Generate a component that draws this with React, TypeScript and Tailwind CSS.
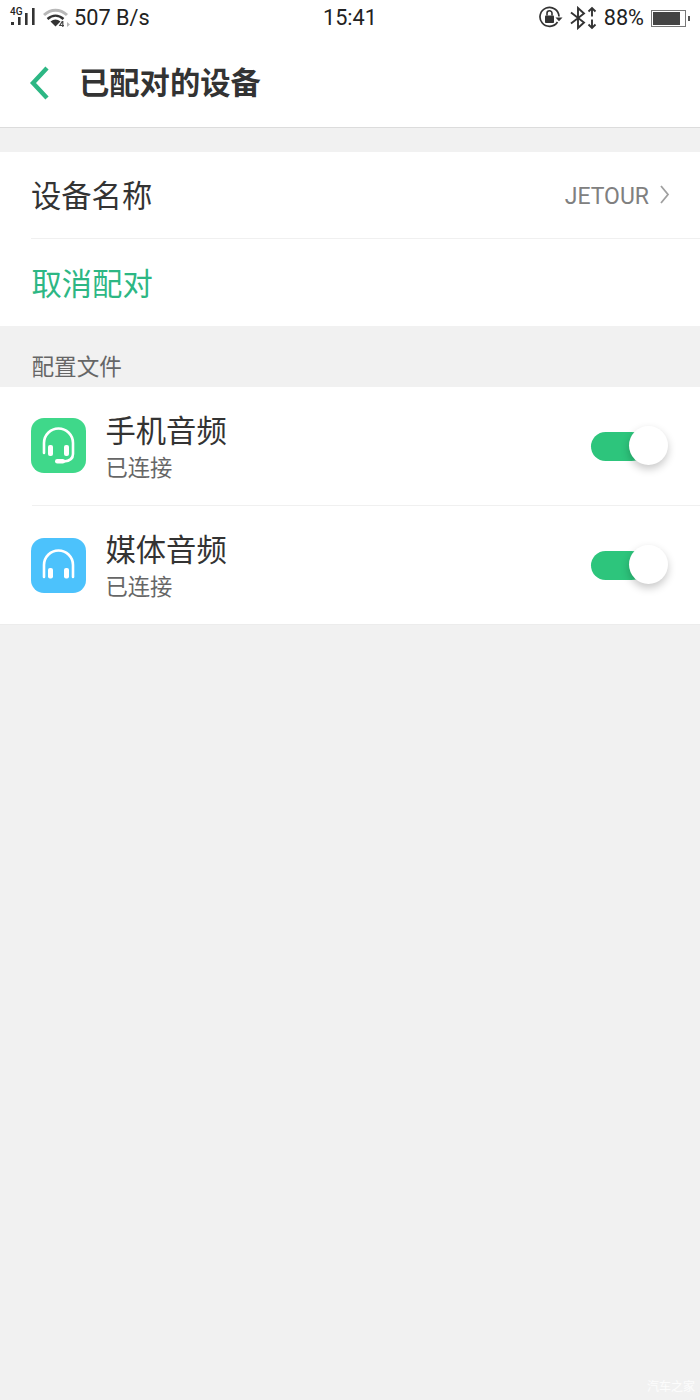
const FONT = "font-['Roboto','Noto_Sans_CJK_SC',sans-serif]";

function SignalIcon() {
  return (
    <svg width="26" height="20" viewBox="0 0 26 20" fill="#333">
      <rect x="1" y="14" width="3" height="3" />
      <rect x="8" y="9" width="2.6" height="8" />
      <rect x="15" y="5" width="2.6" height="12" />
      <rect x="22" y="0" width="2.6" height="17" />
    </svg>
  );
}

function WifiIcon() {
  return (
    <svg width="28" height="20" viewBox="0 0 28 20" fill="none">
      <path d="M1 7C8 0.5 17 0.5 24 7" stroke="#b8b8b8" strokeWidth="3" />
      <path d="M4.5 11C9.5 6.5 15.5 6.5 20.5 11" stroke="#333" strokeWidth="2.4" />
      <path d="M7.5 13.5Q12.5 9.5 17.5 13.5L12.5 18.5z" fill="#333" />
      <path d="M19.5 13 16.8 17.5H21M19.8 13v6" stroke="#444" strokeWidth="1.2" />
      <path d="M24 19v-5l3 2.5z" fill="#b5b5b5" />
    </svg>
  );
}

function RotateLockIcon() {
  return (
    <svg width="24" height="24" viewBox="0 0 24 24" fill="none">
      <path d="M18.5 16A9.5 9.5 0 1 1 20 10.5" stroke="#333" strokeWidth="1.7" />
      <path d="M16.5 11.5h7l-3.5 3.8z" fill="#333" />
      <rect x="6" y="9.5" width="9" height="7.5" rx="0.8" fill="#333" />
      <path d="M8 9.5V7.3a2.5 2.5 0 0 1 5 0v2.2" stroke="#333" strokeWidth="1.6" />
    </svg>
  );
}

function BluetoothArrows() {
  return (
    <svg width="27" height="24" viewBox="0 0 27 24" fill="none" stroke="#333" strokeWidth="1.9">
      <path d="M1 6.5 14 16.5 8 22V2l6 5.5L1 17.5" />
      <path d="M22 2v8.5M18.5 5.5 22 2l3.5 3.5M22 13.5V22M18.5 18.5 22 22l3.5-3.5" />
    </svg>
  );
}

function Battery() {
  return (
    <div className="flex items-center">
      <div className="w-[35px] h-[17px] border border-[#777] bg-white p-[1px] flex">
        <div className="w-[86%] bg-[#444]" />
      </div>
      <div className="w-[2px] h-[5px] ml-[2px] bg-[#555]" />
    </div>
  );
}

function AppIcon({ bg, mic }: { bg: string; mic?: boolean }) {
  return (
    <div className={`w-[55px] h-[55px] rounded-[13px] shrink-0 ${bg} ${mic ? 'mb-[2px]' : ''}`}>
      {mic ? (
        <svg width="55" height="55" viewBox="0 0 55 55" fill="none" stroke="#fff" strokeLinecap="round">
          <path d="M13 35V25a14.5 14.5 0 0 1 29 0v11c0 5-3 7-9 7.5" strokeWidth="2.6" />
          <rect x="17" y="27" width="5" height="11" rx="2" fill="#fff" stroke="none" />
          <rect x="33" y="27" width="5" height="11" rx="2" fill="#fff" stroke="none" />
          <rect x="24" y="41" width="10" height="4.5" rx="2.2" fill="#fff" stroke="none" />
        </svg>
      ) : (
        <svg width="55" height="55" viewBox="0 0 55 55" fill="none" stroke="#fff" strokeLinecap="round">
          <path d="M13 39V27a14.5 14.5 0 0 1 29 0v12" strokeWidth="2.6" />
          <rect x="17" y="30" width="5" height="10.5" rx="2" fill="#fff" stroke="none" />
          <rect x="33" y="30" width="5" height="10.5" rx="2" fill="#fff" stroke="none" />
        </svg>
      )}
    </div>
  );
}

function Toggle() {
  return (
    <div className="relative w-[77px] h-[40px]">
      <div className="absolute left-0 top-[6px] w-[55px] h-[29px] rounded-full bg-[#2dc57c]" />
      <div className="absolute right-0 top-0 w-[39px] h-[39px] rounded-full bg-white shadow-[0_4px_8px_rgba(0,0,0,0.22)]" />
    </div>
  );
}

function ProfileRow({ title, bg, mic, height }: { title: string; bg: string; mic?: boolean; height: string }) {
  return (
    <div className={`flex items-center pl-[31px] pr-[32px] ${height}`}>
      <AppIcon bg={bg} mic={mic} />
      <div className="ml-[19.5px] flex-1 pt-[4px]">
        <div className="text-[30.3px] leading-[38px] text-[#333]">{title}</div>
        <div className="mt-[2px] text-[22.3px] leading-[30px] text-[#666]">已连接</div>
      </div>
      <Toggle />
    </div>
  );
}

export default function App() {
  return (
    <div className={`${FONT} relative w-[700px] h-[1400px] bg-[#f1f1f1] flex flex-col`}>
      <div className="h-[128px] bg-white border-b border-[#dcdcdc] flex flex-col">
        <div className="h-[37px] mb-[1px] flex items-center justify-between px-[10px] text-[21.7px] text-[#222]">
          <div className="flex items-center w-[240px]">
            <div className="relative">
              <SignalIcon />
              <span className="absolute left-0 top-[-2px] text-[10px] font-medium leading-[12px]">4G</span>
            </div>
            <div className="ml-[7px]"><WifiIcon /></div>
            <span className="ml-[3px]">507 B/s</span>
          </div>
          <span>15:41</span>
          <div className="flex items-center justify-end w-[240px] gap-[7px]">
            <RotateLockIcon />
            <BluetoothArrows />
            <span>88%</span>
            <Battery />
          </div>
        </div>
        <div className="flex-1 flex items-center pl-[29px]">
          <svg width="20" height="34" viewBox="0 0 20 34" fill="none" stroke="#2db784" strokeWidth="4.4">
            <path d="M18 2 4 17l14 15" />
          </svg>
          <span className="ml-[30px] text-[30.3px] font-bold text-[#333] pt-[2px]">已配对的设备</span>
        </div>
      </div>

      <div className="mt-[24px] bg-white h-[174px] flex flex-col">
        <div className="h-[87px] ml-[31px] pr-[30px] flex items-center justify-between border-b border-[#f0f0f0]">
          <span className="text-[30.3px] text-[#333] pt-[4px]">设备名称</span>
          <div className="flex items-center text-[#808080] pt-[2px]">
            <span className="text-[23px] pt-[2px]">JETOUR</span>
            <svg width="10" height="19" viewBox="0 0 10 19" fill="none" stroke="#a0a0a0" strokeWidth="1.8" className="ml-[11px] mb-[3px]">
              <path d="M1 1l7 8.5-7 8.5" />
            </svg>
          </div>
        </div>
        <div className="flex-1 pl-[31.5px] flex items-center text-[30.3px] text-[#2db784] pt-[4px]">取消配对</div>
      </div>

      <div className="h-[61px] pl-[31.5px] pb-[3px] flex items-end text-[22.6px] leading-[32px] text-[#666]">配置文件</div>

      <div className="bg-white border-b border-[#ececec]">
        <ProfileRow title="手机音频" bg="bg-[#3fd88a]" mic height="h-[118px]" />
        <div className="ml-[32px] h-px bg-[#f0f0f0]" />
        <ProfileRow title="媒体音频" bg="bg-[#4cc2fc]" height="h-[118px]" />
      </div>

      <span className="absolute right-[5px] bottom-[4px] text-[12px] text-white/80">汽车之家</span>
    </div>
  );
}
